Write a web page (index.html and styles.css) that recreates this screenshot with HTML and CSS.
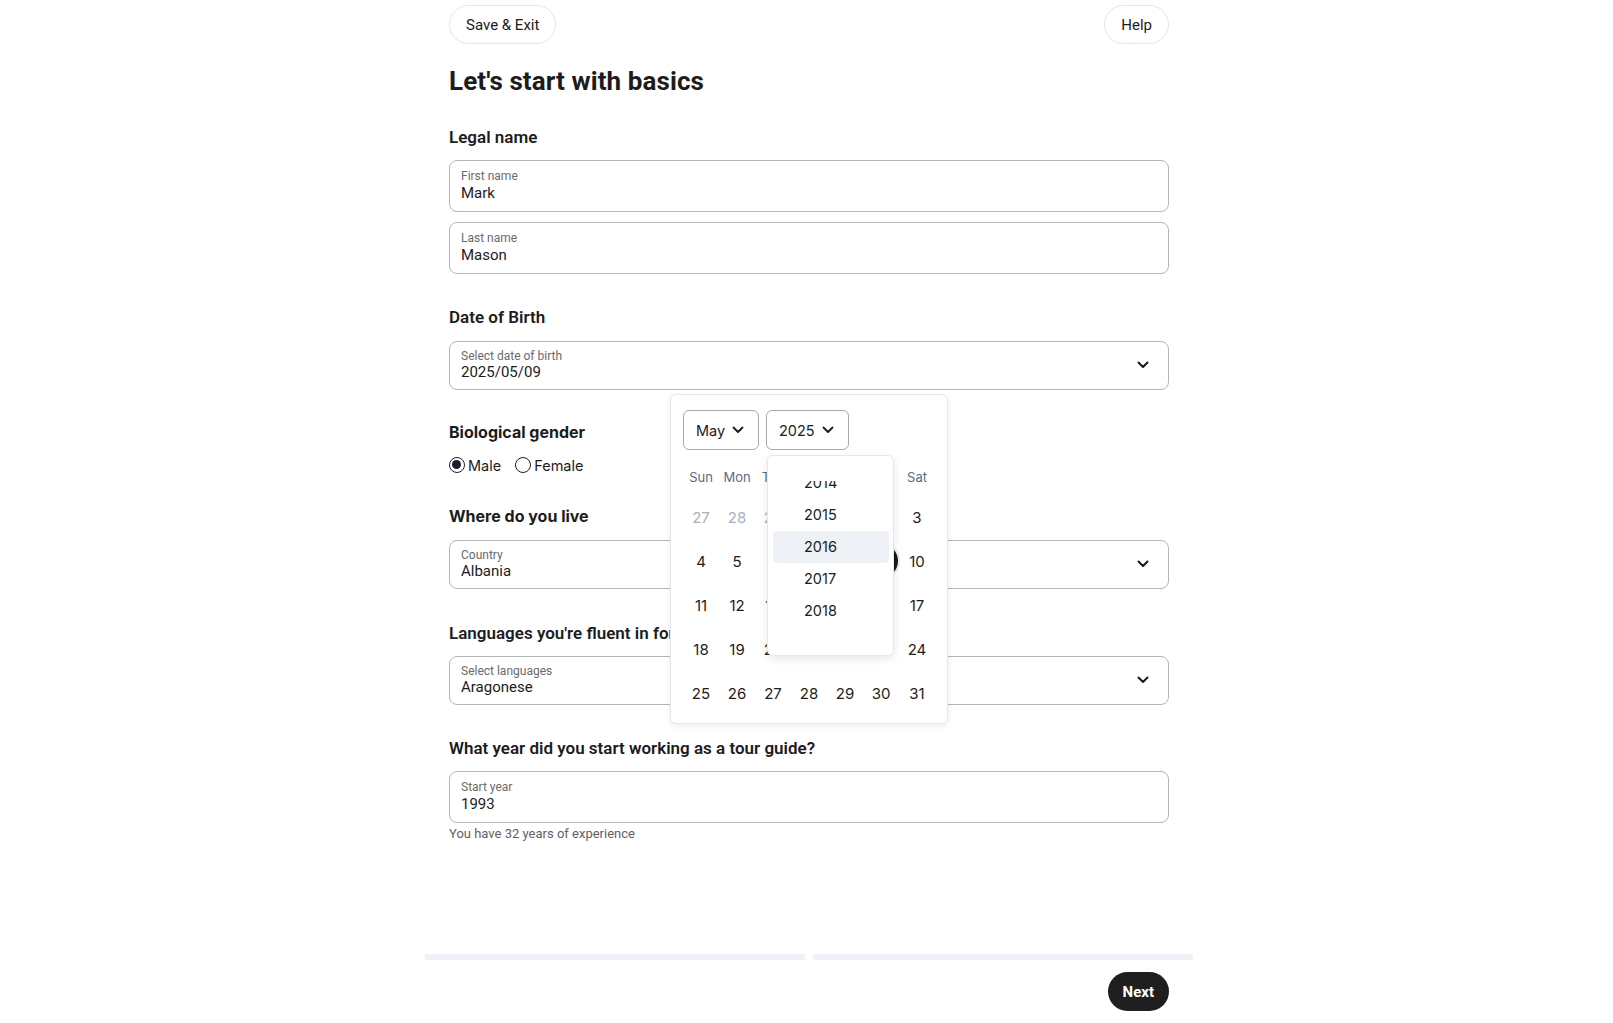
FILE: index.html
```html
<!DOCTYPE html>
<html lang="en">
<head>
<meta charset="utf-8">
<title>Let's start with basics</title>
<link rel="stylesheet" href="styles.css">
</head>
<body>
<div class="page">
  <header class="topbar">
    <button class="pill">Save &amp; Exit</button>
    <button class="pill">Help</button>
  </header>

  <main class="form">
    <h1 class="title">Let's start with basics</h1>

    <section class="sec sec-legal">
      <h2 class="sec-title">Legal name</h2>
      <div class="stack">
        <div class="field field-text">
          <span class="field-label">First name</span>
          <span class="field-value">Mark</span>
        </div>
        <div class="field field-text">
          <span class="field-label">Last name</span>
          <span class="field-value">Mason</span>
        </div>
      </div>
    </section>

    <section class="sec sec-dob">
      <h2 class="sec-title">Date of Birth</h2>
      <div class="dob">
        <div class="field field-select">
          <div class="field-body">
            <span class="field-label">Select date of birth</span>
            <span class="field-value">2025/05/09</span>
          </div>
          <svg class="chev" width="12" height="8" viewBox="0 0 12 8"><path d="M1.5 1.5 6 6l4.5-4.5" fill="none" stroke="#1a1a1a" stroke-width="2" stroke-linecap="round" stroke-linejoin="round"/></svg>
        </div>

        <div class="cal">
          <div class="cal-head">
            <div class="csel csel-month">May
              <svg width="12" height="8" viewBox="0 0 12 8"><path d="M1.5 1.5 6 6l4.5-4.5" fill="none" stroke="#1a1a1a" stroke-width="1.8" stroke-linecap="round" stroke-linejoin="round"/></svg>
            </div>
            <div class="csel csel-year">2025
              <svg width="12" height="8" viewBox="0 0 12 8"><path d="M1.5 1.5 6 6l4.5-4.5" fill="none" stroke="#1a1a1a" stroke-width="1.8" stroke-linecap="round" stroke-linejoin="round"/></svg>
            </div>
          </div>
          <div class="dow">
            <span>Sun</span><span>Mon</span><span>Tue</span><span>Wed</span><span>Thu</span><span>Fri</span><span>Sat</span>
          </div>
          <div class="days">
            <span class="out">27</span><span class="out">28</span><span class="out">29</span><span class="out">30</span><span>1</span><span>2</span><span>3</span>
            <span>4</span><span>5</span><span>6</span><span>7</span><span>8</span><span class="sel"><i>9</i></span><span>10</span>
            <span>11</span><span>12</span><span>13</span><span>14</span><span>15</span><span>16</span><span>17</span>
            <span>18</span><span>19</span><span>20</span><span>21</span><span>22</span><span>23</span><span>24</span>
            <span>25</span><span>26</span><span>27</span><span>28</span><span>29</span><span>30</span><span>31</span>
          </div>

          <div class="yearlist">
            <div class="yearscroll">
              <div class="years">
                <div class="yr">2014</div>
                <div class="yr">2015</div>
                <div class="yr yr-hover">2016</div>
                <div class="yr">2017</div>
                <div class="yr">2018</div>
              </div>
            </div>
          </div>
        </div>
      </div>
    </section>

    <section class="sec sec-gender">
      <h2 class="sec-title geo">Biological gender</h2>
      <div class="radios">
        <label class="radio"><span class="dot on"></span>Male</label>
        <label class="radio"><span class="dot"></span>Female</label>
      </div>
    </section>

    <section class="sec sec-live">
      <h2 class="sec-title geo">Where do you live</h2>
      <div class="field field-select">
        <div class="field-body">
          <span class="field-label">Country</span>
          <span class="field-value">Albania</span>
        </div>
        <svg class="chev" width="12" height="8" viewBox="0 0 12 8"><path d="M1.5 1.5 6 6l4.5-4.5" fill="none" stroke="#1a1a1a" stroke-width="2" stroke-linecap="round" stroke-linejoin="round"/></svg>
      </div>
    </section>

    <section class="sec sec-lang">
      <h2 class="sec-title">Languages you're fluent in for tours</h2>
      <div class="field field-select">
        <div class="field-body">
          <span class="field-label">Select languages</span>
          <span class="field-value">Aragonese</span>
        </div>
        <svg class="chev" width="12" height="8" viewBox="0 0 12 8"><path d="M1.5 1.5 6 6l4.5-4.5" fill="none" stroke="#1a1a1a" stroke-width="2" stroke-linecap="round" stroke-linejoin="round"/></svg>
      </div>
    </section>

    <section class="sec sec-year">
      <h2 class="sec-title">What year did you start working as a tour guide?</h2>
      <div class="field field-text">
        <span class="field-label">Start year</span>
        <span class="field-value">1993</span>
      </div>
      <p class="helper">You have 32 years of experience</p>
    </section>
  </main>

  <footer class="foot">
    <div class="progress"><span class="seg"></span><span class="seg"></span></div>
    <div class="foot-actions"><button class="next">Next</button></div>
  </footer>
</div>
</body>
</html>
```

FILE: styles.css
```css
* { box-sizing: border-box; }

html, body { margin: 0; background: #ffffff; }

body {
  padding-left: 5px;
  font-family: Roboto, "Liberation Sans", Arial, sans-serif;
  color: #1c1c1c;
}

.page {
  width: 768px;
  margin: 0 auto;
}

.topbar {
  display: flex;
  justify-content: space-between;
  padding: 5px 24px 0;
}

.pill {
  height: 39px;
  padding: 0 16px;
  border: 1px solid #e1e7ef;
  border-radius: 20px;
  background: #fff;
  font-family: Roboto, "Liberation Sans", Arial, sans-serif;
  font-size: 15px;
  font-weight: 400;
  color: #1c1c1c;
}

.form { padding: 0 24px; }

.title {
  margin: 21px 0 0;
  font-size: 26px;
  line-height: 32px;
  font-weight: 700;
  letter-spacing: 0.1px;
}

.sec-title {
  margin: 0;
  font-size: 17px;
  line-height: 24px;
  font-weight: 600;
}

.sec-title.geo {
  font-family: Inter, "Noto Sans", sans-serif;
  font-size: 16px;
  font-weight: 700;
}

.sec-legal { margin-top: 28px; }
.sec-dob { margin-top: 31px; }
.sec-gender { margin-top: 30px; }
.sec-live { margin-top: 27px; }
.sec-lang { margin-top: 32px; }
.sec-year { margin-top: 31px; }

.stack {
  display: flex;
  flex-direction: column;
  gap: 10px;
  margin-top: 11px;
}

.field {
  border: 1px solid #b5b5b5;
  border-radius: 8px;
  background: #fff;
}

.field-text {
  display: flex;
  flex-direction: column;
  padding: 7px 11px 9px;
}

.sec-year .field { margin-top: 11px; }

.field-label {
  font-size: 12px;
  line-height: 16px;
  color: #6b6b6b;
}

.field-value {
  font-size: 15px;
  line-height: 18px;
  color: #1c1c1c;
}

.field-select {
  display: flex;
  align-items: center;
  justify-content: space-between;
  padding: 6px 19px 9px 11px;
  margin-top: 12px;
}

.sec-lang .field-select { margin-top: 11px; }

.field-body {
  display: flex;
  flex-direction: column;
}

.field-select .field-value { line-height: 16px; }

.chev { margin-top: 2px; }

.helper {
  margin: 2px 0 0;
  font-size: 13px;
  line-height: 18px;
  color: #5f5f5f;
}

/* radios */
.radios {
  display: flex;
  gap: 14px;
  margin-top: 9px;
  height: 24px;
  align-items: center;
}

.radio {
  display: flex;
  align-items: center;
  gap: 3px;
  font-family: Inter, "Noto Sans", sans-serif;
  font-size: 14.5px;
  color: #1c1c1c;
}

.dot {
  width: 16px;
  height: 16px;
  border: 1.5px solid #1a202c;
  border-radius: 50%;
  display: inline-block;
  position: relative;
}

.dot.on::after {
  content: "";
  position: absolute;
  left: 2px;
  top: 2px;
  width: 9px;
  height: 9px;
  border-radius: 50%;
  background: #1a202c;
}

/* date picker */
.dob { position: relative; }

.cal {
  position: absolute;
  top: 53px;
  left: 221px;
  width: 278px;
  padding: 15px 12px 8px 12px;
  background: #fff;
  border: 1px solid #e2e8f0;
  border-radius: 6px;
  box-shadow: 0 2px 6px rgba(15, 23, 42, 0.08);
  font-family: Inter, "Noto Sans", sans-serif;
  z-index: 10;
}

.cal-head {
  display: flex;
  gap: 7px;
}

.csel {
  height: 40px;
  display: flex;
  align-items: center;
  gap: 7px;
  padding-left: 12px;
  border: 1px solid #a9a9a9;
  border-radius: 6px;
  font-size: 14.5px;
  color: #1c1c1c;
}

.csel-month { width: 76px; }
.csel-year { width: 83px; }

.dow {
  display: grid;
  grid-template-columns: repeat(7, 36px);
  margin-top: 15px;
  height: 24px;
  align-items: center;
  text-align: center;
  font-size: 13px;
  color: #5a6b84;
}

.days {
  display: grid;
  grid-template-columns: repeat(7, 36px);
  grid-auto-rows: 44px;
  margin-top: 6px;
  align-items: center;
  text-align: center;
  font-size: 15px;
  color: #1c1c1c;
}

.days .out { color: #a7b1c0; }

.days .sel {
  display: flex;
  justify-content: center;
}

.days .sel i {
  font-style: normal;
  width: 34px;
  height: 34px;
  line-height: 34px;
  border-radius: 50%;
  background: #151515;
  color: #fff;
  box-shadow: 0 0 0 2px #e6ebf2;
}

.yearlist {
  position: absolute;
  top: 60px;
  left: 96px;
  width: 127px;
  height: 201px;
  padding: 25px 4px 0 5px;
  background: #fff;
  border: 1px solid #e2e8f0;
  border-radius: 6px;
  box-shadow: 0 3px 8px rgba(15, 23, 42, 0.1);
  z-index: 20;
}

.yearscroll {
  height: 150px;
  overflow: hidden;
}

.years { margin-top: -14px; }

.yr {
  height: 32px;
  line-height: 32px;
  padding-left: 31px;
  font-size: 14.5px;
  color: #1c1c1c;
  border-radius: 4px;
}

.yr-hover { background: #eef2f6; }

/* footer */
.foot { margin-top: 111px; }

.progress {
  display: flex;
  gap: 8px;
}

.seg {
  flex: 1;
  height: 6px;
  background: #eef2f6;
}

.foot-actions {
  display: flex;
  justify-content: flex-end;
  padding: 12px 24px 0;
}

.next {
  height: 39px;
  padding: 0 15px;
  border: 0;
  border-radius: 20px;
  background: #1f1f1f;
  color: #fff;
  font-family: Roboto, "Liberation Sans", Arial, sans-serif;
  font-size: 15px;
  font-weight: 700;
}
```
